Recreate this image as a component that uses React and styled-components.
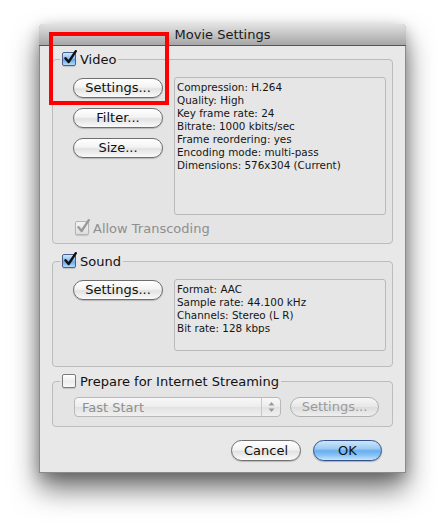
import React from "react";
import styled, { createGlobalStyle, css } from "styled-components";

const GlobalStyle = createGlobalStyle`
  html, body {
    margin: 0;
    background: #ffffff;
  }
  body {
    font-family: "DejaVu Sans", "Liberation Sans", sans-serif;
    color: #111;
  }
`;

const Page = styled.div`
  min-height: 100vh;
  box-sizing: border-box;
  padding: 24px 0 0 39px;
`;

const Window = styled.div`
  position: relative;
  width: 367px;
  box-sizing: border-box;
  background: #e8e8e8;
  border: 1px solid #8a8a8a;
  border-top: none;
  border-radius: 5px 5px 0 0;
  box-shadow: 0 16px 28px rgba(0, 0, 0, 0.55), 0 4px 14px rgba(0, 0, 0, 0.22);
`;

const TitleBar = styled.div`
  height: 21px;
  margin: 0 -1px;
  border-radius: 5px 5px 0 0;
  background: linear-gradient(#e2e2e2, #c4c4c4 50%, #a6a6a6);
  border-bottom: 1px solid #555;
  display: flex;
  align-items: center;
  justify-content: center;
  font-size: 13px;
  color: #1a1a1a;
`;

const Body = styled.div`
  padding: 5px 12px 11px 12px;
`;

const Group = styled.fieldset`
  margin: ${(p) => p.$top || 0}px 0 0 0;
  padding: ${(p) => p.$pad};
  min-width: 0;
  border: 1px solid #bcbcbc;
  border-radius: 4px;
  background: #e4e4e4;
`;

const Legend = styled.legend`
  margin-left: 7px;
  padding: 0 2px;
  display: flex;
  align-items: center;
  gap: 4px;
  height: 16px;
  font-size: 13px;
  color: ${(p) => (p.$disabled ? "#8c8c8c" : "#111")};
`;

const Box = styled.span`
  position: relative;
  display: inline-block;
  flex: none;
  width: 14px;
  height: 14px;
  box-sizing: border-box;
  border-radius: 2px;
  border: 1px solid ${(p) => (p.$disabled ? "#b4b4b4" : p.$checked ? "#4a5f8a" : "#7c7c7c")};
  background: ${(p) =>
    p.$disabled
      ? "linear-gradient(#f2f2f2, #dedede)"
      : p.$checked
      ? "linear-gradient(#cfe8fc, #7fbaf0 50%, #5ea6ec 55%, #b6dcfa)"
      : "linear-gradient(#ffffff, #ececec 55%, #f8f8f8)"};
  box-shadow: 0 1px 1px rgba(0, 0, 0, 0.15);

  svg {
    position: absolute;
    left: 1px;
    top: -3px;
  }
`;

const Check = ({ checked, disabled }) => (
  <Box $checked={checked} $disabled={disabled}>
    {checked && (
      <svg width="13" height="14" viewBox="0 0 13 14">
        <path
          d="M1.5 8.2 L4.6 12 L11.8 1.2"
          fill="none"
          stroke={disabled ? "#9a9a9a" : "#111"}
          strokeWidth="2.4"
          strokeLinecap="round"
          strokeLinejoin="round"
        />
      </svg>
    )}
  </Box>
);

const Row = styled.div`
  display: flex;
  align-items: flex-start;
  gap: ${(p) => p.$gap || 11}px;
  padding-left: ${(p) => p.$left || 20}px;
`;

const Column = styled.div`
  display: flex;
  flex-direction: column;
  gap: 10px;
  padding-top: 1px;
`;

const pill = css`
  box-sizing: border-box;
  height: ${(p) => p.$h || 20}px;
  border-radius: 11px;
  font-family: inherit;
  font-size: 13px;
  display: flex;
  align-items: center;
  justify-content: center;
  padding: 0 0 1px;
`;

const Button = styled.button`
  ${pill};
  width: ${(p) => p.$w || 90}px;
  color: ${(p) => (p.disabled ? "#9a9a9a" : "#111")};
  border: 1px solid ${(p) => (p.disabled ? "#b0b0b0" : "#6e6e6e")};
  background: ${(p) =>
    p.disabled
      ? "linear-gradient(#f6f6f6, #e6e6e6 50%, #dcdcdc 52%, #eeeeee)"
      : "linear-gradient(#ffffff, #f3f3f3 45%, #e2e2e2 55%, #fafafa)"};
  box-shadow: ${(p) => (p.disabled ? "none" : "0 1px 1px rgba(0,0,0,0.2)")};
`;

const DefaultButton = styled.button`
  ${pill};
  width: ${(p) => p.$w || 69}px;
  color: #111;
  border: 1px solid #34508c;
  background: linear-gradient(#cde6fb, #9ccbf4 40%, #6aaeed 52%, #86c2f5 75%, #c6e6fd);
  box-shadow: 0 1px 1px rgba(0, 0, 0, 0.25);
`;

const Info = styled.div`
  box-sizing: border-box;
  width: 212px;
  height: ${(p) => p.$h}px;
  border: 1px solid #b9b9b9;
  border-radius: 3px;
  background: #e6e6e6;
  padding: 3px 2px;
  font-size: 10.4px;
  line-height: 13px;
  color: #151515;
  white-space: nowrap;
`;

const CheckRow = styled.label`
  display: flex;
  align-items: center;
  gap: 4px;
  margin: 6px 0 0 22px;
  height: 14px;
  font-size: 13px;
  color: #8e8e8e;
`;

const Popup = styled.div`
  box-sizing: border-box;
  width: 207px;
  height: 20px;
  display: flex;
  align-items: stretch;
  border: 1px solid #b8b8b8;
  border-radius: 4px;
  background: linear-gradient(#f8f8f8, #ececec 50%, #e2e2e2 52%, #f0f0f0);
  font-size: 13px;
  color: #8f8f8f;
`;

const PopupLabel = styled.span`
  flex: 1;
  display: flex;
  align-items: center;
  padding-left: 7px;
`;

const PopupArrows = styled.span`
  width: 18px;
  border-left: 1px solid #c8c8c8;
  display: flex;
  align-items: center;
  justify-content: center;
`;

const Footer = styled.div`
  display: flex;
  justify-content: flex-end;
  gap: 12px;
  margin-top: 13px;
  padding-right: 11px;
`;

const Highlight = styled.div`
  position: absolute;
  left: 9px;
  top: 8px;
  width: 120px;
  height: 73px;
  box-sizing: border-box;
  border: 4px solid #ff0000;
  pointer-events: none;
`;

export default function App() {
  return (
    <>
      <GlobalStyle />
      <Page>
        <Window>
          <TitleBar>Movie Settings</TitleBar>
          <Body>
            <Group $pad="10px 0 8px 0">
              <Legend>
                <Check checked />
                Video
              </Legend>
              <Row>
                <Column>
                  <Button>Settings...</Button>
                  <Button>Filter...</Button>
                  <Button>Size...</Button>
                </Column>
                <Info $h={138}>
                  Compression: H.264
                  <br />
                  Quality: High
                  <br />
                  Key frame rate: 24
                  <br />
                  Bitrate: 1000 kbits/sec
                  <br />
                  Frame reordering: yes
                  <br />
                  Encoding mode: multi-pass
                  <br />
                  Dimensions: 576x304 (Current)
                </Info>
              </Row>
              <CheckRow>
                <Check checked disabled />
                Allow Transcoding
              </CheckRow>
            </Group>

            <Group $top={9} $pad="10px 0 15px 0">
              <Legend>
                <Check checked />
                Sound
              </Legend>
              <Row>
                <Column>
                  <Button>Settings...</Button>
                </Column>
                <Info $h={72}>
                  Format: AAC
                  <br />
                  Sample rate: 44.100 kHz
                  <br />
                  Channels: Stereo (L R)
                  <br />
                  Bit rate: 128 kbps
                </Info>
              </Row>
            </Group>

            <Group $top={6} $pad="8px 0 9px 0">
              <Legend>
                <Check />
                Prepare for Internet Streaming
              </Legend>
              <Row $gap={9} $left={21}>
                <Popup>
                  <PopupLabel>Fast Start</PopupLabel>
                  <PopupArrows>
                    <svg width="7" height="12" viewBox="0 0 7 12">
                      <path d="M3.5 1 L6.5 4.5 H0.5 Z M3.5 11 L6.5 7.5 H0.5 Z" fill="#9a9a9a" />
                    </svg>
                  </PopupArrows>
                </Popup>
                <Button disabled $w={89}>
                  Settings...
                </Button>
              </Row>
            </Group>

            <Footer>
              <Button $w={70} $h={21}>
                Cancel
              </Button>
              <DefaultButton $h={21}>OK</DefaultButton>
            </Footer>
          </Body>
          <Highlight />
        </Window>
      </Page>
    </>
  );
}
